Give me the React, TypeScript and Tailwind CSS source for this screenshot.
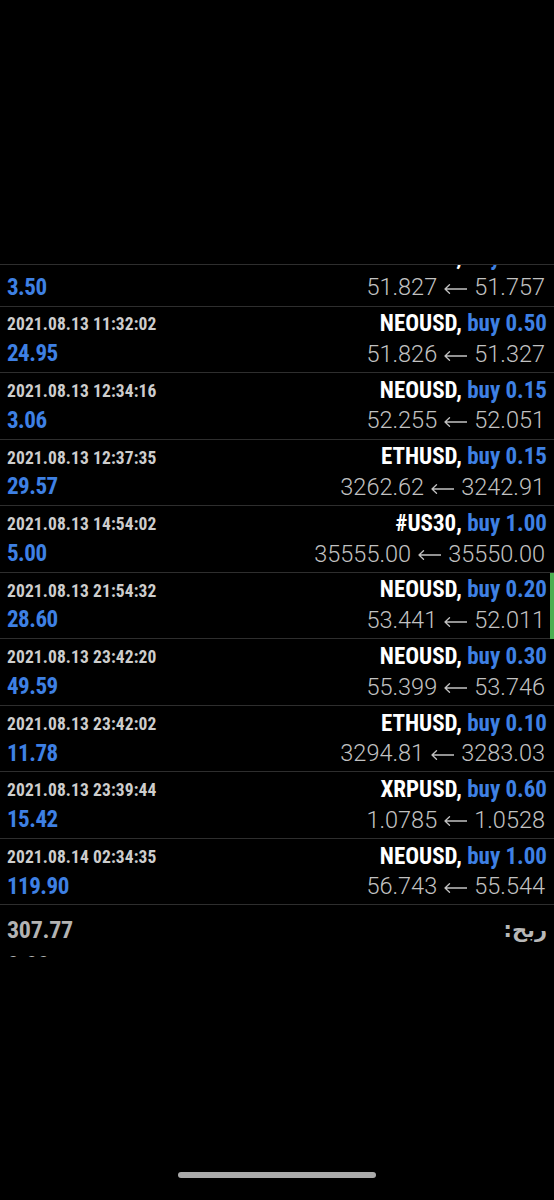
type Row = {
  date?: string;
  sym: string;
  lot: string;
  profit: string;
  from: string;
  to: string;
  mark?: boolean;
};

const rows: Row[] = [
  { sym: "NEOUSD", lot: "buy 0.50", profit: "3.50", from: "51.827", to: "51.757" },
  { date: "2021.08.13 11:32:02", sym: "NEOUSD", lot: "buy 0.50", profit: "24.95", from: "51.826", to: "51.327" },
  { date: "2021.08.13 12:34:16", sym: "NEOUSD", lot: "buy 0.15", profit: "3.06", from: "52.255", to: "52.051" },
  { date: "2021.08.13 12:37:35", sym: "ETHUSD", lot: "buy 0.15", profit: "29.57", from: "3262.62", to: "3242.91" },
  { date: "2021.08.13 14:54:02", sym: "#US30", lot: "buy 1.00", profit: "5.00", from: "35555.00", to: "35550.00" },
  { date: "2021.08.13 21:54:32", sym: "NEOUSD", lot: "buy 0.20", profit: "28.60", from: "53.441", to: "52.011", mark: true },
  { date: "2021.08.13 23:42:20", sym: "NEOUSD", lot: "buy 0.30", profit: "49.59", from: "55.399", to: "53.746" },
  { date: "2021.08.13 23:42:02", sym: "ETHUSD", lot: "buy 0.10", profit: "11.78", from: "3294.81", to: "3283.03" },
  { date: "2021.08.13 23:39:44", sym: "XRPUSD", lot: "buy 0.60", profit: "15.42", from: "1.0785", to: "1.0528" },
  { date: "2021.08.14 02:34:35", sym: "NEOUSD", lot: "buy 1.00", profit: "119.90", from: "56.743", to: "55.544" },
];

const cond = { fontStretch: "75%" } as const;

function Arrow() {
  return (
    <svg width="23" height="10" viewBox="0 0 23 10" className="mx-[7px] mt-[2px]" fill="none">
      <path d="M1 5H23M1 5L5.5 0.8M1 5L5.5 9.2" stroke="#c2c2c2" strokeWidth="1.3" strokeLinecap="round" />
    </svg>
  );
}

function TradeRow({ r }: { r: Row }) {
  return (
    <div className="relative h-[66.55px] border-b border-[#2e2e2e] pl-[7px] pr-[7px] pt-[3px] font-['Roboto',sans-serif]">
      <div className="flex h-[30px] items-center justify-between">
        <span style={cond} className="text-[17.5px] font-bold tracking-[0.1px] text-[#cdcdcd]">
          {r.date ?? ""}
        </span>
        <span style={cond} className="text-[23px] font-bold text-white">
          {r.sym},{" "}
          <span className="text-[#3e80e4]">{r.lot}</span>
        </span>
      </div>
      <div className="flex h-[30px] items-center justify-between">
        <span style={cond} className="text-[23px] font-bold tracking-[-0.5px] text-[#3e80e4]">
          {r.profit}
        </span>
        <span className="mr-[2px] flex items-center text-[23.5px] font-light text-[#c2c2c2]">
          <span>{r.from}</span>
          <Arrow />
          <span>{r.to}</span>
        </span>
      </div>
      {r.mark && <div className="absolute right-0 top-0 h-[66px] w-[4px] bg-[#4caf50]" />}
    </div>
  );
}

export default function App() {
  return (
    <div className="flex min-h-[1200px] w-full flex-col bg-black">
      <div className="h-[264px]" />
      <div className="h-[693px] overflow-hidden border-t border-[#2e2e2e]">
        <div className="-mt-[25px]">
          {rows.map((r, i) => (
            <TradeRow key={i} r={r} />
          ))}
          <div className="pl-[7px] pr-[7px] pt-[10px] font-['Roboto',sans-serif]">
            <div className="flex h-[30px] items-center justify-between">
              <span style={cond} className="text-[24px] font-bold tracking-[-0.3px] text-[#b3b3b3]">
                307.77
              </span>
              <span className="font-['DejaVu_Sans',sans-serif] text-[21px] font-bold text-[#b8b8b8]" dir="rtl">
                ربح:
              </span>
            </div>
            <div className="mt-[5px] flex h-[30px] items-center justify-between">
              <span style={cond} className="text-[24px] font-bold tracking-[-0.3px] text-[#b3b3b3]">
                0.00
              </span>
            </div>
          </div>
        </div>
      </div>
      <div className="flex-1" />
      <div className="flex h-[35px] justify-center">
        <div className="mt-[7px] h-[6px] w-[198px] rounded-full bg-[#aaaaaa]" />
      </div>
    </div>
  );
}
